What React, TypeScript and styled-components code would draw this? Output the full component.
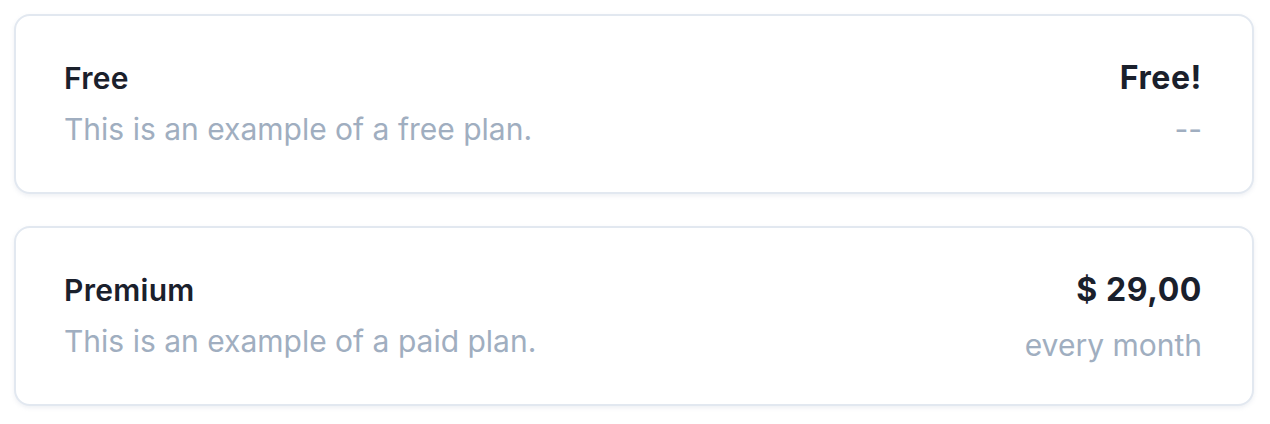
import React from "react";
import styled, { createGlobalStyle } from "styled-components";

const GlobalStyle = createGlobalStyle`
  body {
    margin: 0;
    background: #ffffff;
    font-family: Inter, "Noto Sans", sans-serif;
  }
`;

const List = styled.div`
  display: flex;
  flex-direction: column;
  gap: 32px;
  padding: 14px 16px 14px 14px;
`;

const Card = styled.div`
  display: flex;
  justify-content: space-between;
  align-items: flex-start;
  height: 180px;
  box-sizing: border-box;
  padding: 42px 50px 0 48px;
  background: #ffffff;
  border: 2px solid #e2e8f0;
  border-radius: 16px;
  box-shadow: 0 2px 4px rgba(160, 174, 192, 0.18);
`;

const Column = styled.div<{ $right?: boolean }>`
  display: flex;
  flex-direction: column;
  align-items: ${(p) => (p.$right ? "flex-end" : "flex-start")};
`;

const Title = styled.div`
  font-size: 30px;
  line-height: 40px;
  font-weight: 600;
  letter-spacing: 0.3px;
  color: #1a202c;
`;

const Price = styled.div`
  font-size: 32px;
  line-height: 40px;
  font-weight: 700;
  letter-spacing: 0.6px;
  color: #1a202c;
`;

const Sub = styled.div<{ $shift?: number }>`
  font-size: 30px;
  line-height: 40px;
  margin-top: ${(p) => 11 + (p.$shift ?? 0)}px;
  color: #a0aec0;
`;

type Plan = {
  name: string;
  description: string;
  price: string;
  period: string;
  shift?: number;
};

const plans: Plan[] = [
  {
    name: "Free",
    description: "This is an example of a free plan.",
    price: "Free!",
    period: "--",
  },
  {
    name: "Premium",
    description: "This is an example of a paid plan.",
    price: "$ 29,00",
    period: "every month",
    shift: 4,
  },
];

export default function App() {
  return (
    <>
      <GlobalStyle />
      <List>
        {plans.map((plan) => (
          <Card key={plan.name}>
            <Column>
              <Title>{plan.name}</Title>
              <Sub>{plan.description}</Sub>
            </Column>
            <Column $right>
              <Price>{plan.price}</Price>
              <Sub $shift={plan.shift}>{plan.period}</Sub>
            </Column>
          </Card>
        ))}
      </List>
    </>
  );
}
